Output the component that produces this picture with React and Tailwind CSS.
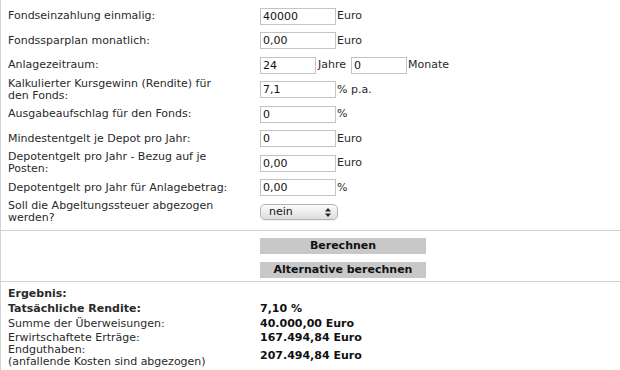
import React from "react";

const rows = [
  { label: "Fondseinzahlung einmalig:", value: "40000", unit: "Euro" },
  { label: "Fondssparplan monatlich:", value: "0,00", unit: "Euro" },
  { label: "Anlagezeitraum:", years: "24", months: "0" },
  { label: ["Kalkulierter Kursgewinn (Rendite) für", "den Fonds:"], value: "7,1", unit: "% p.a." },
  { label: "Ausgabeaufschlag für den Fonds:", value: "0", unit: "%" },
  { label: "Mindestentgelt je Depot pro Jahr:", value: "0", unit: "Euro" },
  { label: ["Depotentgelt pro Jahr - Bezug auf je", "Posten:"], value: "0,00", unit: "Euro" },
  { label: "Depotentgelt pro Jahr für Anlagebetrag:", value: "0,00", unit: "%" },
];

function Field({ value, width = "w-[76px]" }) {
  return (
    <input
      type="text"
      defaultValue={value}
      className={`${width} h-[17px] border border-[#c3c3c3] bg-white px-[2px] text-[11px] leading-[15px] text-[#111] outline-none`}
    />
  );
}

function Label({ label }) {
  if (Array.isArray(label)) {
    return (
      <div className="leading-[12px]">
        {label[0]}
        <br />
        {label[1]}
      </div>
    );
  }
  return <div>{label}</div>;
}

export default function App() {
  return (
    <div
      className="w-[620px] h-[370px] overflow-hidden bg-white border-l border-[#d2d2d2] text-[11px] text-[#2a2a2a]"
      style={{ fontFamily: '"DejaVu Sans", Verdana, sans-serif' }}
    >
      <div className="pt-[4px] pb-[5.5px]">
        {rows.map((row, i) => (
          <div key={i} className="grid grid-cols-[252px_1fr] h-[24.5px] items-center pl-[7px]">
            <Label label={row.label} />
            <div className="flex items-center">
              {row.years ? (
                <>
                  <Field value={row.years} width="w-[56px]" />
                  <span className="ml-[2px]">Jahre</span>
                  <span className="ml-[5px] flex">
                    <Field value={row.months} width="w-[56px]" />
                  </span>
                  <span className="ml-[1px]">Monate</span>
                </>
              ) : (
                <>
                  <Field value={row.value} />
                  <span className="ml-[1px]">{row.unit}</span>
                </>
              )}
            </div>
          </div>
        ))}
        <div className="grid grid-cols-[252px_1fr] h-[24.5px] items-center pl-[7px]">
          <Label label={["Soll die Abgeltungssteuer abgezogen", "werden?"]} />
          <div className="flex items-center">
            <div className="relative w-[78px] h-[16px] rounded-[5px] border border-[#b4b4b4] bg-gradient-to-b from-[#fbfbfb] to-[#dedede] shadow-[0_1px_0_rgba(0,0,0,0.05)]">
              <span className="absolute left-[8px] top-0 leading-[14px] text-[11px] text-[#111]">nein</span>
              <svg className="absolute right-[6px] top-[3px]" width="6" height="9" viewBox="0 0 6 9">
                <path d="M3 0 L6 3.5 L0 3.5 Z" fill="#222" />
                <path d="M3 9 L6 5.5 L0 5.5 Z" fill="#222" />
              </svg>
            </div>
          </div>
        </div>
      </div>

      <div className="border-t border-[#d2d2d2] pt-[7px] pb-[3px] pl-[259px]">
        <div className="flex flex-col gap-[8px]">
          <button className="w-[166px] h-[16px] bg-[#c8c8c8] text-[11px] font-bold leading-[16px] text-[#111]">
            Berechnen
          </button>
          <button className="w-[166px] h-[16px] bg-[#c8c8c8] text-[11px] font-bold leading-[16px] text-[#111]">
            Alternative berechnen
          </button>
        </div>
      </div>

      <div className="border-t border-[#d2d2d2] pt-[5px] pl-[7px]">
        <div className="h-[14px] flex items-center font-bold">Ergebnis:</div>
        <div className="grid grid-cols-[252px_1fr] h-[15px] items-center">
          <div className="font-bold">Tatsächliche Rendite:</div>
          <div className="font-bold text-[#111]">7,10 %</div>
        </div>
        <div className="grid grid-cols-[252px_1fr] h-[14px] items-center">
          <div>Summe der Überweisungen:</div>
          <div className="font-bold text-[#111]">40.000,00 Euro</div>
        </div>
        <div className="grid grid-cols-[252px_1fr] h-[14px] items-center">
          <div>Erwirtschaftete Erträge:</div>
          <div className="font-bold text-[#111]">167.494,84 Euro</div>
        </div>
        <div className="grid grid-cols-[252px_1fr] items-center">
          <div className="leading-[12px]">
            Endguthaben:
            <br />
            (anfallende Kosten sind abgezogen)
          </div>
          <div className="font-bold text-[#111]">207.494,84 Euro</div>
        </div>
      </div>
    </div>
  );
}
